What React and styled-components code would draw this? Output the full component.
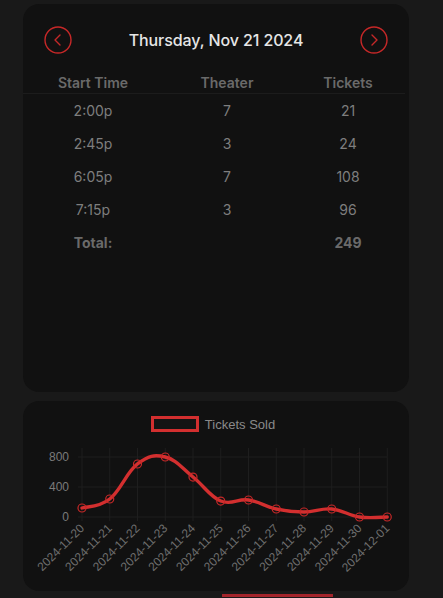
import React from "react";
import styled, { createGlobalStyle } from "styled-components";

const Global = createGlobalStyle`
  html, body { margin: 0; padding: 0; background: #191919; }
  body { font-family: "Inter", "Open Sans", sans-serif; }
`;

const Page = styled.div`
  width: 443px;
  height: 598px;
  overflow: hidden;
  display: flex;
  flex-direction: column;
  padding: 4px 0 0 23px;
  box-sizing: border-box;
`;

const Card = styled.section`
  width: 386px;
  height: ${(p) => p.$h}px;
  background: #111111;
  border-radius: 16px;
  box-sizing: border-box;
  margin-bottom: ${(p) => p.$mb || 0}px;
  display: flex;
  flex-direction: column;
`;

const Header = styled.div`
  display: flex;
  align-items: center;
  justify-content: space-between;
  padding: 22px 21px 0 21px;
  height: 28px;
`;

const Title = styled.h2`
  margin: 0;
  font-size: 16px;
  font-weight: 500;
  color: #e6e6e6;
  letter-spacing: -0.1px;
`;

const ArrowBtn = styled.button`
  background: none;
  border: none;
  padding: 0;
  width: 28px;
  height: 28px;
  display: flex;
  cursor: pointer;
`;

const Grid = styled.div`
  display: grid;
  grid-template-columns: 140px 128px 114px;
  margin-top: 18px;
`;

const HeadCell = styled.div`
  text-align: center;
  font-size: 14px;
  font-weight: 600;
  color: #6a6a6a;
  height: 21px;
  line-height: 21px;
  border-bottom: 1px solid #1c1c1c;
`;

const Cell = styled.div`
  text-align: center;
  font-size: 14px;
  font-weight: ${(p) => (p.$bold ? 700 : 400)};
  color: ${(p) => (p.$bold ? "#6a6a6a" : "#7e7e7e")};
  height: 33px;
  line-height: 33px;
`;

const Legend = styled.div`
  display: flex;
  align-items: center;
  justify-content: center;
  gap: 6px;
  margin-top: 15px;
  margin-left: -6px;
  height: 16px;
`;

const LegendBox = styled.span`
  width: 42px;
  height: 10px;
  border: 3px solid #d32f2f;
  background: #141414;
`;

const LegendText = styled.span`
  font-family: "Liberation Sans", Arial, sans-serif;
  font-size: 13px;
  color: #8a8a8a;
`;

const ChartSvg = styled.svg`
  display: block;
  margin-top: 8px;
`;

const Indicator = styled.div`
  width: 111px;
  height: 3px;
  background: #a3242b;
  margin-left: 199px;
  margin-top: 3px;
`;

const Arrow = ({ dir }) => (
  <svg width="28" height="28" viewBox="0 0 28 28">
    <circle cx="14" cy="14" r="13" fill="none" stroke="#c62828" strokeWidth="1.4" />
    {dir === "left" ? (
      <path d="M16 9 L11 14 L16 19" fill="none" stroke="#c62828" strokeWidth="1.4" strokeLinecap="round" strokeLinejoin="round" />
    ) : (
      <path d="M12 9 L17 14 L12 19" fill="none" stroke="#c62828" strokeWidth="1.4" strokeLinecap="round" strokeLinejoin="round" />
    )}
  </svg>
);

const rows = [
  ["2:00p", "7", "21"],
  ["2:45p", "3", "24"],
  ["6:05p", "7", "108"],
  ["7:15p", "3", "96"],
];

const dates = [
  "2024-11-20", "2024-11-21", "2024-11-22", "2024-11-23", "2024-11-24", "2024-11-25",
  "2024-11-26", "2024-11-27", "2024-11-28", "2024-11-29", "2024-11-30", "2024-12-01",
];
const values = [120, 240, 707, 800, 533, 213, 227, 107, 67, 107, 0, 0];

const X0 = 59;
const DX = 27.75;
const Y0 = 77;
const SCALE = 0.075;
const pts = values.map((v, i) => [X0 + i * DX, Y0 - v * SCALE]);

function smoothPath(p, t = 0.4) {
  let d = `M${p[0][0]},${p[0][1]}`;
  for (let i = 0; i < p.length - 1; i++) {
    const p0 = p[i - 1] || p[i];
    const p1 = p[i];
    const p2 = p[i + 1];
    const p3 = p[i + 2] || p2;
    const c1x = p1[0] + ((p2[0] - p0[0]) * t) / 2;
    const c1y = p1[1] + ((p2[1] - p0[1]) * t) / 2;
    const c2x = p2[0] - ((p3[0] - p1[0]) * t) / 2;
    const c2y = p2[1] - ((p3[1] - p1[1]) * t) / 2;
    d += ` C${c1x},${c1y} ${c2x},${c2y} ${p2[0]},${p2[1]}`;
  }
  return d;
}

const Chart = () => (
  <ChartSvg width="386" height="144" viewBox="0 0 386 144">
    {pts.map(([x], i) => (
      <line key={"v" + i} x1={x} x2={x} y1={8} y2={Y0 + 4} stroke="#1e1e1e" strokeWidth="1" />
    ))}
    {[0, 400, 800].map((v) => (
      <g key={v}>
        <line x1={X0 - 4} x2={X0 + 11 * DX} y1={Y0 - v * SCALE} y2={Y0 - v * SCALE} stroke="#1e1e1e" strokeWidth="1" />
        <text
          x={46}
          y={Y0 - v * SCALE + 4}
          textAnchor="end"
          fontFamily="Liberation Sans, Arial, sans-serif"
          fontSize="12"
          fill="#7a7a7a"
        >
          {v}
        </text>
      </g>
    ))}
    <path d={smoothPath(pts)} fill="none" stroke="#d32f2f" strokeWidth="3.4" strokeLinejoin="round" strokeLinecap="round" />
    {pts.map(([x, y], i) => (
      <circle key={"p" + i} cx={x} cy={y} r="4" fill="none" stroke="#c62828" strokeWidth="1.2" />
    ))}
    {pts.map(([x], i) => (
      <text
        key={"l" + i}
        x={x + 3}
        y={Y0 + 12}
        textAnchor="end"
        transform={`rotate(-45 ${x + 3} ${Y0 + 12})`}
        fontFamily="Liberation Sans, Arial, sans-serif"
        fontSize="12"
        fill="#6e6e6e"
      >
        {dates[i]}
      </text>
    ))}
  </ChartSvg>
);

export default function App() {
  return (
    <>
      <Global />
      <Page>
        <Card $h={388} $mb={9}>
          <Header>
            <ArrowBtn aria-label="Previous day"><Arrow dir="left" /></ArrowBtn>
            <Title>Thursday, Nov 21 2024</Title>
            <ArrowBtn aria-label="Next day"><Arrow dir="right" /></ArrowBtn>
          </Header>
          <Grid>
            <HeadCell>Start Time</HeadCell>
            <HeadCell>Theater</HeadCell>
            <HeadCell>Tickets</HeadCell>
            {rows.map((r) => (
              <React.Fragment key={r[0]}>
                <Cell>{r[0]}</Cell>
                <Cell>{r[1]}</Cell>
                <Cell>{r[2]}</Cell>
              </React.Fragment>
            ))}
            <Cell $bold>Total:</Cell>
            <Cell />
            <Cell $bold>249</Cell>
          </Grid>
        </Card>
        <Card $h={190}>
          <Legend>
            <LegendBox />
            <LegendText>Tickets Sold</LegendText>
          </Legend>
          <Chart />
        </Card>
        <Indicator />
      </Page>
    </>
  );
}
